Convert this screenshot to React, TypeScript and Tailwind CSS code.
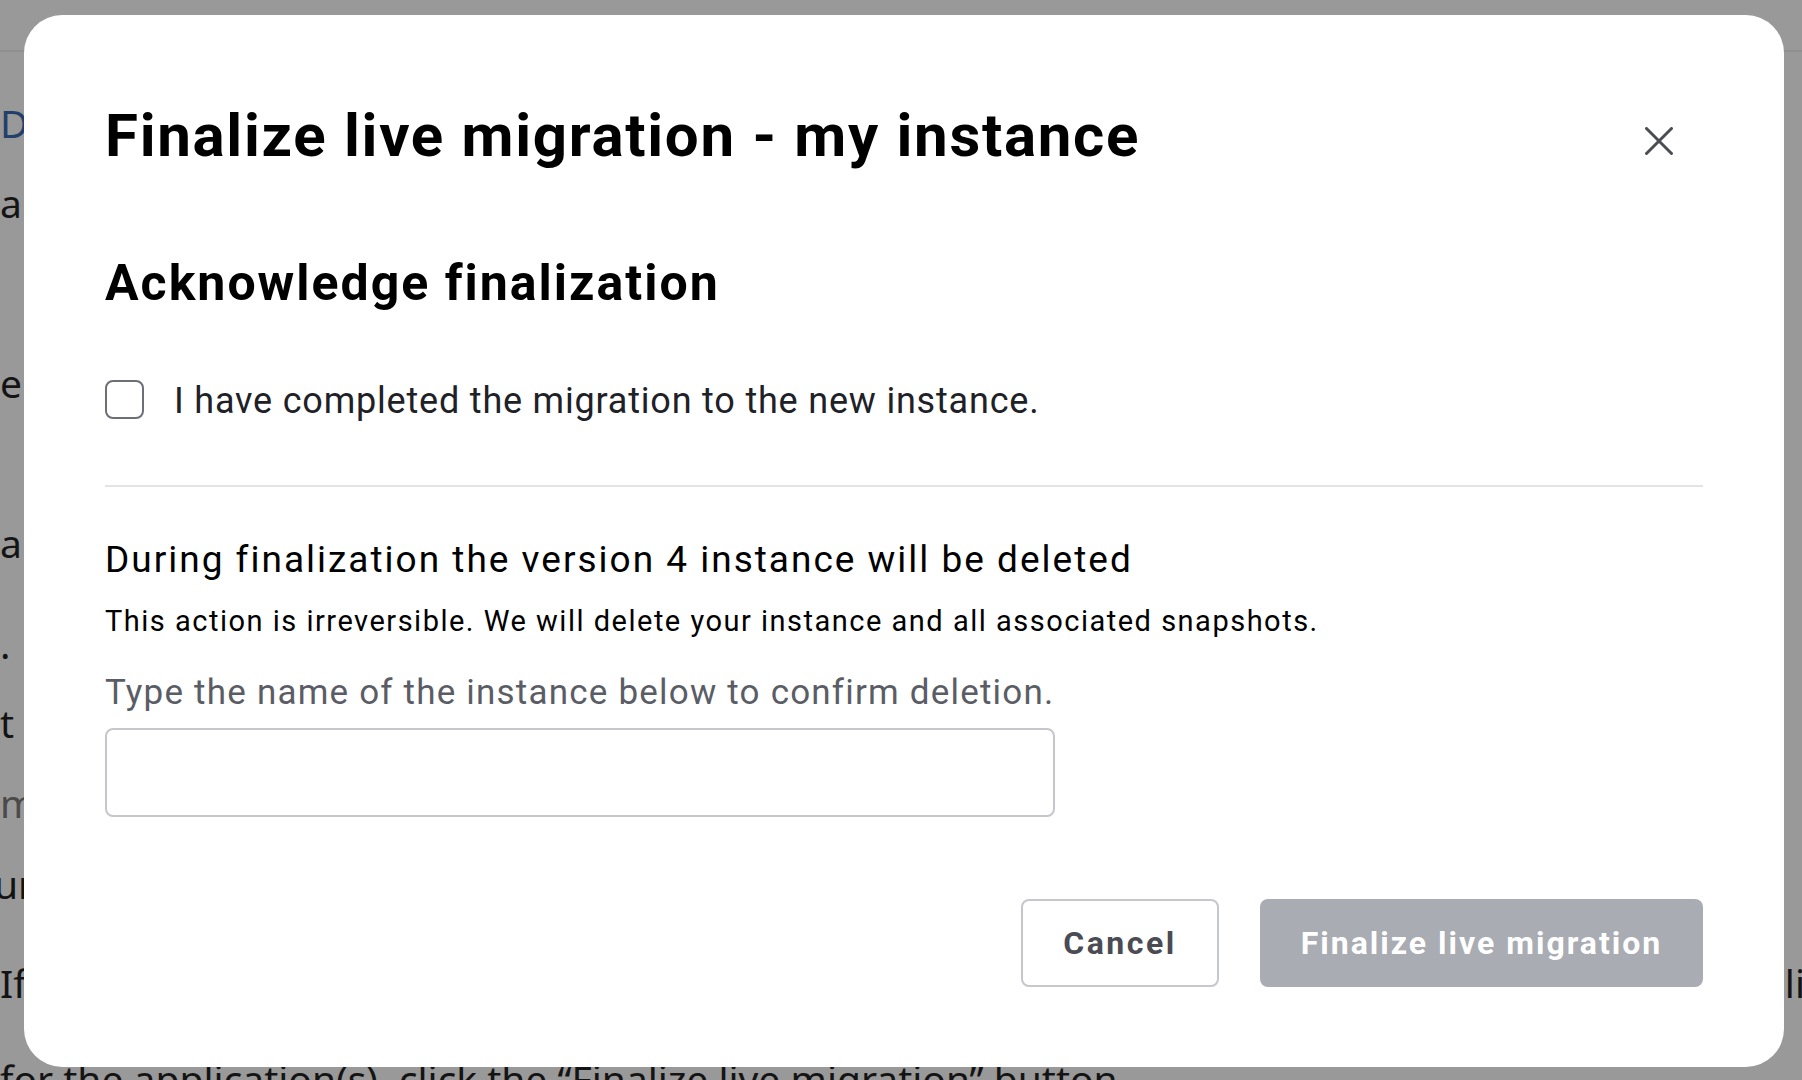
import React from "react";

export default function App() {
  return (
    <div className="relative w-[1802px] h-[1080px] overflow-hidden bg-[#999999] [font-family:'Noto_Sans',sans-serif]">
      {/* underlying page, dimmed by the overlay */}
      <div className="h-[52px] border-b-2 border-[#8f8f8f]" />
      <div className="flex flex-col text-[39px] leading-[40px] text-[#141414] whitespace-nowrap">
        <div className="mt-[51px] text-[#23406a]">Database</div>
        <div className="mt-[40px]">a new</div>
        <div className="mt-[140px]">e new</div>
        <div className="mt-[120px]">a copy</div>
        <div className="mt-[61px]">.</div>
        <div className="mt-[39px]">t the</div>
        <div className="mt-[40px] text-[#4a4a4a]">m status</div>
        <div className="mt-[41px] -ml-[6px]">ur apps</div>
        <div className="mt-[59px] w-[1805px] flex justify-between">
          <span>If all</span>
          <span>finali</span>
        </div>
        <div className="mt-[56px]">for the application(s), click the “Finalize live migration” button.</div>
      </div>

      {/* modal */}
      <div className="absolute left-[24px] top-[15px] w-[1760px] h-[1052px] rounded-[38px] bg-white px-[81px] pt-[85px] [font-family:Roboto,sans-serif]">
        <div className="flex items-start justify-between">
          <h2 className="text-[60px] leading-[72px] font-bold text-black tracking-[1.7px]">
            Finalize live migration - my instance
          </h2>
          <button className="mt-[11px] mr-[14px] w-[60px] h-[60px] flex items-center justify-center">
            <svg width="28" height="28" viewBox="0 0 28 28" fill="none">
              <path d="M1.5 1.5 L26.5 26.5 M26.5 1.5 L1.5 26.5" stroke="#4b4d55" strokeWidth="3" strokeLinecap="round" />
            </svg>
          </button>
        </div>

        <h3 className="mt-[80px] text-[50px] leading-[62px] font-bold text-black tracking-[2px]">
          Acknowledge finalization
        </h3>

        <label className="mt-[65px] flex items-start">
          <span className="mt-[1px] w-[39px] h-[39px] rounded-[8px] border-2 border-[#6d6f77] bg-white shrink-0" />
          <span className="ml-[30px] text-[36px] leading-[44px] text-[#202127] tracking-[0.8px]">
            I have completed the migration to the new instance.
          </span>
        </label>

        <div className="mt-[62px] border-t-2 border-[#e3e4e7]" />

        <div className="mt-[52px] text-[37px] leading-[42px] text-black tracking-[2px]">
          During finalization the version 4 instance will be deleted
        </div>
        <div className="mt-[22px] text-[29px] leading-[36px] text-black tracking-[1.5px]">
          This action is irreversible. We will delete your instance and all associated snapshots.
        </div>
        <div className="mt-[33px] text-[35px] leading-[42px] text-[#5b5d66] tracking-[1.2px]">
          Type the name of the instance below to confirm deletion.
        </div>
        <input
          className="mt-[14px] block w-[950px] h-[89px] rounded-[8px] border-2 border-[#c6c7cc] bg-white outline-none"
          type="text"
        />

        <div className="mt-[82px] flex justify-end gap-[41px]">
          <button className="w-[198px] h-[88px] rounded-[8px] border-2 border-[#c6c7cc] bg-white text-[32px] font-bold text-[#4a4b53] tracking-[2.5px]">
            Cancel
          </button>
          <button className="w-[443px] h-[88px] rounded-[8px] bg-[#a9acb2] text-[32px] font-bold text-white tracking-[2px]">
            Finalize live migration
          </button>
        </div>
      </div>
    </div>
  );
}
